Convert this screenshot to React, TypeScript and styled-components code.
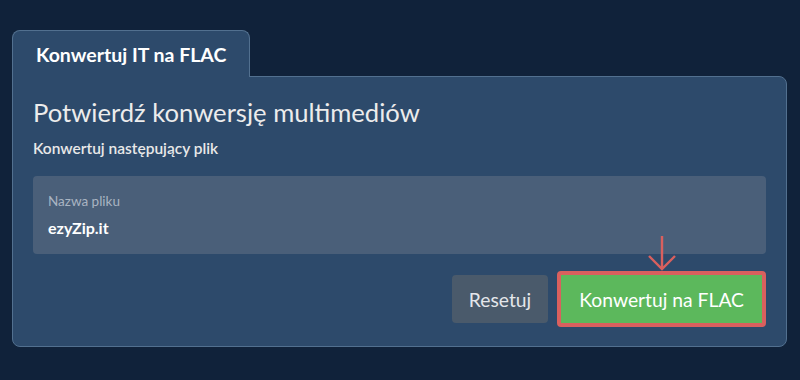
import styled, { createGlobalStyle } from "styled-components";

const Global = createGlobalStyle`
  html, body {
    margin: 0;
    background: #10223a;
    font-family: Lato, "Noto Sans", sans-serif;
  }
`

const Page = styled.div`
  padding: 30px 13px 0 12px;
`
const Tab = styled.div`
  display: inline-flex;
  align-items: center;
  box-sizing: border-box;
  width: 238px;
  height: 47px;
  padding: 0 0 0 23px;
  background: #2d4a6b;
  border: 1px solid #52708f;
  border-bottom: none;
  border-radius: 8px 8px 0 0;
  color: #ffffff;
  font-size: 19.5px;
  font-weight: 700;
  position: relative;
  z-index: 1;
  margin-bottom: -1px;
`
const Panel = styled.div`
  box-sizing: border-box;
  background: #2d4a6b;
  border: 1px solid #52708f;
  border-radius: 0 8px 8px 8px;
  padding: 20px 20px 19px 20px;
`
const Heading = styled.h2`
  margin: 0;
  font-size: 25.6px;
  font-weight: 400;
  line-height: 30px;
  color: #ececec;
`
const Sub = styled.div`
  margin-top: 12px;
  font-size: 15.5px;
  font-weight: 600;
  line-height: 18px;
  color: #e8e8e8;
`
const FileBox = styled.div`
  margin-top: 19px;
  height: 78px;
  box-sizing: border-box;
  background: #4a5f79;
  border-radius: 4px;
  padding: 17px 15px 0;
`
const Label = styled.div`
  font-size: 13.5px;
  line-height: 16px;
  color: #a9b4c2;
`
const Value = styled.div`
  margin-top: 9px;
  font-size: 16px;
  font-weight: 700;
  line-height: 20px;
  color: #ffffff;
`
const Actions = styled.div`
  display: flex;
  justify-content: flex-end;
  align-items: center;
  gap: 9px;
  margin-top: 17px;
`
const Button = styled.button<{ $primary?: boolean }>`
  font-family: Lato, "Noto Sans", sans-serif;
  font-size: 19.3px;
  height: ${(p) => (p.$primary ? "56px" : "48px")};
  padding: ${(p) => (p.$primary ? "0 18px" : "0 17px")};
  border-radius: 4px;
  border: ${(p) => (p.$primary ? "4px solid #d9605e" : "none")};
  background: ${(p) => (p.$primary ? "#5cb85c" : "#4a5a6b")};
  color: ${(p) => (p.$primary ? "#ffffff" : "#e4e6ea")};
  position: relative;
  cursor: pointer;
`
const Arrow = styled.svg`
  position: absolute;
  left: 50%;
  top: -40px;
  transform: translateX(-50%);
`

export default function App() {
  return (
    <Page>
      <Global />
      <Tab>Konwertuj IT na FLAC</Tab>
      <Panel>
        <Heading>Potwierdź konwersję multimediów</Heading>
        <Sub>Konwertuj następujący plik</Sub>
        <FileBox>
          <Label>Nazwa pliku</Label>
          <Value>ezyZip.it</Value>
        </FileBox>
        <Actions>
          <Button>Resetuj</Button>
          <Button $primary>
            Konwertuj na FLAC
            <Arrow width="30" height="36" viewBox="0 0 30 36">
              <path d="M15 1 V34 M2 21 L15 34 L28 21" fill="none" stroke="#d9605e" strokeWidth="2.4" />
            </Arrow>
          </Button>
        </Actions>
      </Panel>
    </Page>
  )
}
